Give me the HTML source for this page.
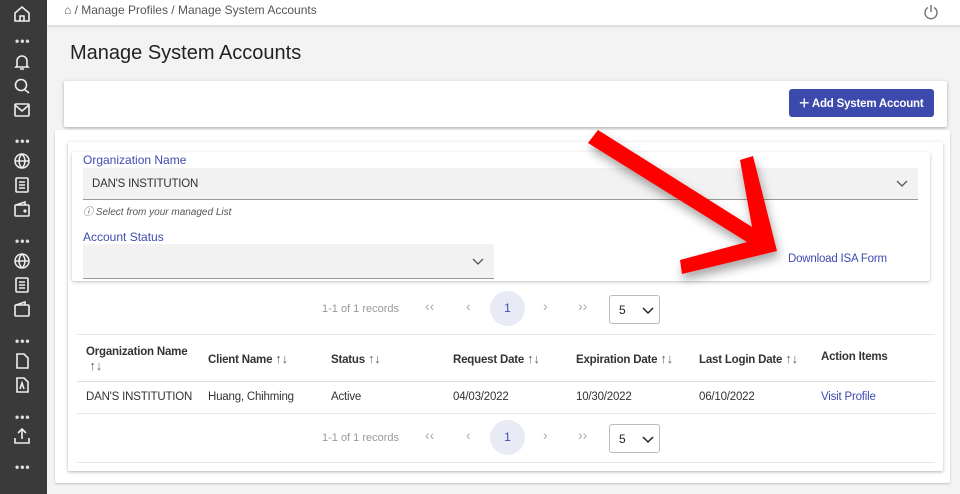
<!DOCTYPE html>
<html><head><style>
*{box-sizing:border-box;margin:0;padding:0}
body{width:960px;height:494px;overflow:hidden;background:#f3f3f3;font-family:"Liberation Sans",Arial,sans-serif;position:relative;color:#222}
.abs{position:absolute}
#side{left:0;top:0;width:47px;height:494px;background:#3a3a3a}
.ic{position:absolute;left:13px;width:18px;height:18px}
.dots{position:absolute;left:15px;color:#ddd;font-size:12px;letter-spacing:1px;font-weight:bold}
#top{left:47px;top:0;width:913px;height:26px;background:#fff;border-bottom:1px solid #ddd;box-shadow:0 1px 2px rgba(0,0,0,.1)}
.card{background:#fff;box-shadow:0 1px 3px rgba(0,0,0,.3);border-radius:2px}
.lbl{color:#3f4bb0;font-size:12px}
.field{background:#f2f2f2;border-bottom:1px solid #999}
.th{font-size:11.5px;font-weight:bold;color:#333;letter-spacing:-.2px}
.td{font-size:11.5px;color:#333;letter-spacing:-.2px}
.hr{height:1px;background:#e6e6e6}
.pg{font-size:11px;color:#999}
.ar{font-size:14px;color:#aaa}
.so{font-weight:normal;color:#666;font-size:13px}
</style></head><body>
<div id="side" class="abs">
<svg class="ic" style="top:5px" viewBox="0 0 18 18" fill="none" stroke="#eee" stroke-width="1.6"><path d="M2 8L9 2l7 6v8H2z M7 16v-5h4v5"/></svg>
<div class="dots" style="top:34px">•••</div>
<svg class="ic" style="top:53px" viewBox="0 0 18 18" fill="none" stroke="#eee" stroke-width="1.6"><path d="M4 13V8a5 5 0 0 1 10 0v5l1 1H3z M7 16h4"/></svg>
<svg class="ic" style="top:77px" viewBox="0 0 18 18" fill="none" stroke="#eee" stroke-width="1.6"><circle cx="8" cy="8" r="5.5"/><path d="M11 12l5 4"/></svg>
<svg class="ic" style="top:101px" viewBox="0 0 18 18" fill="none" stroke="#eee" stroke-width="1.6"><rect x="2" y="3" width="14" height="12" rx="1"/><path d="M2 4l7 6 7-6"/></svg>
<div class="dots" style="top:134px">•••</div>
<svg class="ic" style="top:152px" viewBox="0 0 18 18" fill="none" stroke="#eee" stroke-width="1.5"><circle cx="9" cy="9" r="7"/><path d="M2 9h14M9 2c-4 4-4 10 0 14M9 2c4 4 4 10 0 14"/></svg>
<svg class="ic" style="top:176px" viewBox="0 0 18 18" fill="none" stroke="#eee" stroke-width="1.6"><rect x="3" y="2" width="12" height="14" rx="1"/><path d="M6 6h6M6 9h6M6 12h6"/></svg>
<svg class="ic" style="top:200px" viewBox="0 0 18 18" fill="none" stroke="#eee" stroke-width="1.6"><rect x="2" y="5" width="14" height="11" rx="1"/><path d="M3 5l9-3v3"/><circle cx="12" cy="11" r=".8" fill="#eee"/></svg>
<div class="dots" style="top:234px">•••</div>
<svg class="ic" style="top:252px" viewBox="0 0 18 18" fill="none" stroke="#eee" stroke-width="1.5"><circle cx="9" cy="9" r="7"/><path d="M2 9h14M9 2c-4 4-4 10 0 14M9 2c4 4 4 10 0 14"/></svg>
<svg class="ic" style="top:276px" viewBox="0 0 18 18" fill="none" stroke="#eee" stroke-width="1.6"><rect x="3" y="2" width="12" height="14" rx="1"/><path d="M6 6h6M6 9h6M6 12h6"/></svg>
<svg class="ic" style="top:300px" viewBox="0 0 18 18" fill="none" stroke="#eee" stroke-width="1.6"><rect x="2" y="5" width="14" height="11" rx="1"/><path d="M3 5l9-3v3"/></svg>
<div class="dots" style="top:334px">•••</div>
<svg class="ic" style="top:352px" viewBox="0 0 18 18" fill="none" stroke="#eee" stroke-width="1.6"><path d="M4 2h7l4 4v10H4z"/></svg>
<svg class="ic" style="top:376px" viewBox="0 0 18 18" fill="none" stroke="#eee" stroke-width="1.6"><path d="M4 2h7l4 4v10H4z M7 13l2-6 2 6"/></svg>
<div class="dots" style="top:410px">•••</div>
<svg class="ic" style="top:427px" viewBox="0 0 18 18" fill="none" stroke="#eee" stroke-width="1.6"><path d="M2 11v5h14v-5M9 12V2M5 6l4-4 4 4"/></svg>
<div class="dots" style="top:460px">•••</div>
</div>
<div id="top" class="abs">
<div class="abs" style="left:17px;top:3px;font-size:12px;color:#555">⌂ / Manage Profiles / Manage System Accounts</div>
<svg class="abs" style="left:875px;top:3px" width="18" height="18" viewBox="0 0 18 18" fill="none" stroke="#777" stroke-width="1.5"><path d="M6 4.5a6 6 0 1 0 6 0M9 2v7"/></svg>
</div>
<div class="abs" style="left:70px;top:42px;font-size:20px;color:#222">Manage System Accounts</div>
<div class="abs card" style="left:64px;top:81px;width:883px;height:46px">
<div class="abs" style="left:725px;top:8px;width:145px;height:28px;background:#3c4aad;border-radius:3px;color:#fff;font-size:11.5px;font-weight:bold;line-height:28px;padding-left:10px;letter-spacing:-.2px;white-space:nowrap"><span style="font-size:18px;font-weight:normal;vertical-align:-2px">+</span> Add System Account</div>
</div>
<div class="abs card" style="left:55px;top:130px;width:895px;height:353px;box-shadow:0 1px 2px rgba(0,0,0,.2)"></div>
<div class="abs card" style="left:68px;top:142px;width:875px;height:329px"></div>
<div class="abs card" style="left:72px;top:152px;width:858px;height:129px;box-shadow:0 1px 3px rgba(0,0,0,.25)">
<div class="abs lbl" style="left:11px;top:1px">Organization Name</div>
<div class="abs field" style="left:11px;top:16px;width:835px;height:32px"><span class="abs td" style="left:9px;top:10px">DAN'S INSTITUTION</span><svg class="abs" style="right:10px;top:10px" width="12" height="10" viewBox="0 0 12 10" fill="none" stroke="#555" stroke-width="1.3"><path d="M1 3l5 5 5-5"/></svg></div>
<div class="abs" style="left:11px;top:51px;font-size:10px;color:#555;font-style:italic">ⓘ Select from your managed List</div>
<div class="abs lbl" style="left:11px;top:78px">Account Status</div>
<div class="abs field" style="left:11px;top:92px;width:411px;height:35px"><svg class="abs" style="right:10px;top:12px" width="12" height="10" viewBox="0 0 12 10" fill="none" stroke="#555" stroke-width="1.3"><path d="M1 3l5 5 5-5"/></svg></div>
<div class="abs lbl" style="left:716px;top:101px;font-size:11.5px;letter-spacing:-.2px">Download ISA Form</div>
</div>
<!-- pagination top -->
<div class="abs pg" style="left:322px;top:303px">1-1 of 1 records</div>
<div class="abs ar" style="left:425px;top:298px">‹‹</div><div class="abs ar" style="left:466px;top:298px">‹</div>
<div class="abs" style="left:490px;top:291px;width:35px;height:35px;border-radius:50%;background:#e8eaf6;color:#3f4bb0;font-size:12px;text-align:center;line-height:35px">1</div>
<div class="abs ar" style="left:543px;top:298px">›</div><div class="abs ar" style="left:578px;top:298px">››</div>
<div class="abs" style="left:609px;top:295px;width:51px;height:29px;border:1px solid #bbb;border-radius:3px;font-size:12px;padding:7px 0 0 9px">5<svg class="abs" style="left:32px;top:9px" width="12" height="10" viewBox="0 0 12 10" fill="none" stroke="#222" stroke-width="1.5"><path d="M1 3l5 5 5-5"/></svg></div>
<div class="abs hr" style="left:77px;top:334px;width:858px"></div>
<div class="abs th" style="left:86px;top:346px">Organization Name<br><span class="so">&nbsp;↑↓</span></div>
<div class="abs th" style="left:208px;top:351px">Client Name <span class="so">↑↓</span></div>
<div class="abs th" style="left:331px;top:351px">Status <span class="so">↑↓</span></div>
<div class="abs th" style="left:453px;top:351px">Request Date <span class="so">↑↓</span></div>
<div class="abs th" style="left:576px;top:351px">Expiration Date <span class="so">↑↓</span></div>
<div class="abs th" style="left:699px;top:351px">Last Login Date <span class="so">↑↓</span></div>
<div class="abs th" style="left:821px;top:351px">Action Items</div>
<div class="abs hr" style="left:77px;top:381px;width:858px;background:#ddd"></div>
<div class="abs td" style="left:86px;top:391px">DAN'S INSTITUTION</div>
<div class="abs td" style="left:208px;top:391px">Huang, Chihming</div>
<div class="abs td" style="left:331px;top:391px">Active</div>
<div class="abs td" style="left:453px;top:391px">04/03/2022</div>
<div class="abs td" style="left:576px;top:391px">10/30/2022</div>
<div class="abs td" style="left:699px;top:391px">06/10/2022</div>
<div class="abs td" style="left:821px;top:391px;color:#3f4bb0">Visit Profile</div>
<div class="abs hr" style="left:77px;top:413px;width:858px"></div>
<div class="abs pg" style="left:322px;top:432px">1-1 of 1 records</div>
<div class="abs ar" style="left:425px;top:427px">‹‹</div><div class="abs ar" style="left:466px;top:427px">‹</div>
<div class="abs" style="left:490px;top:420px;width:35px;height:35px;border-radius:50%;background:#e8eaf6;color:#3f4bb0;font-size:12px;text-align:center;line-height:35px">1</div>
<div class="abs ar" style="left:543px;top:427px">›</div><div class="abs ar" style="left:578px;top:427px">››</div>
<div class="abs" style="left:609px;top:424px;width:51px;height:29px;border:1px solid #bbb;border-radius:3px;font-size:12px;padding:7px 0 0 9px">5<svg class="abs" style="left:32px;top:9px" width="12" height="10" viewBox="0 0 12 10" fill="none" stroke="#222" stroke-width="1.5"><path d="M1 3l5 5 5-5"/></svg></div>
<div class="abs hr" style="left:77px;top:462px;width:858px"></div>
<svg class="abs" style="left:0;top:0" width="960" height="494">
<defs><filter id="sh"><feDropShadow dx="2" dy="6" stdDeviation="5" flood-color="#000" flood-opacity=".35"/></filter></defs>
<polygon filter="url(#sh)" fill="#f00" points="598,130 752,227 740,160 753,156 777,251 682,274 680,260 747,242 588,143"/>
</svg>
</body></html>
